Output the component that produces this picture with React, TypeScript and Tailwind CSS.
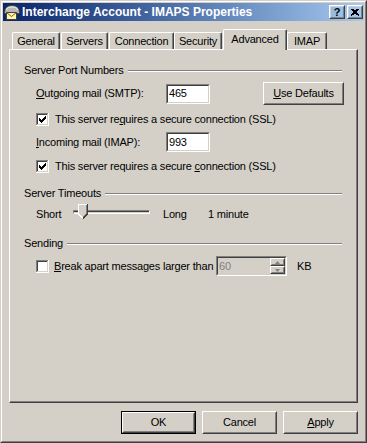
function Checkbox({ checked }: { checked?: boolean }) {
  const marks = [
    [3, 5], [4, 6], [5, 7], [6, 6], [7, 5], [8, 4], [9, 3],
  ];
  return (
    <svg width="13" height="13" viewBox="0 0 13 13" shapeRendering="crispEdges" className="shrink-0">
      <rect x="0" y="0" width="12" height="1" fill="#808080" />
      <rect x="0" y="0" width="1" height="12" fill="#808080" />
      <rect x="0" y="12" width="13" height="1" fill="#ffffff" />
      <rect x="12" y="0" width="1" height="13" fill="#ffffff" />
      <rect x="1" y="1" width="10" height="1" fill="#404040" />
      <rect x="1" y="1" width="1" height="10" fill="#404040" />
      <rect x="1" y="11" width="11" height="1" fill="#d4d0c8" />
      <rect x="11" y="1" width="1" height="11" fill="#d4d0c8" />
      <rect x="2" y="2" width="9" height="9" fill="#ffffff" />
      {checked && marks.map(([x, y]) => <rect key={x} x={x} y={y} width="1" height="3" fill="#000000" />)}
    </svg>
  );
}

function Raised({ children, className = '' }: { children?: React.ReactNode; className?: string }) {
  return (
    <div className={`border border-t-white border-l-white border-r-[#404040] border-b-[#404040] ${className}`}>
      <div className="h-full flex items-center justify-center border border-t-[#d4d0c8] border-l-[#d4d0c8] border-r-[#808080] border-b-[#808080]">
        {children}
      </div>
    </div>
  );
}

function Field({ value, className = '', disabled }: { value: string; className?: string; disabled?: boolean }) {
  return (
    <div className={`border border-t-[#808080] border-l-[#808080] border-r-white border-b-white ${className}`}>
      <div
        className={`h-full flex items-center border border-t-[#404040] border-l-[#404040] border-r-[#d4d0c8] border-b-[#d4d0c8] ${
          disabled ? 'bg-[#d4d0c8] text-[#808080]' : 'bg-white'
        }`}
      >
        <span className="pl-[1px] flex-1">{value}</span>
        {disabled && (
          <div className="w-[15px] h-full flex flex-col">
            <Raised className="flex-1">
              <svg width="5" height="3" viewBox="0 0 5 3"><path d="M2.5 0 L5 3 L0 3 Z" fill="#808080" /></svg>
            </Raised>
            <Raised className="flex-1">
              <svg width="5" height="3" viewBox="0 0 5 3"><path d="M0 0 L5 0 L2.5 3 Z" fill="#808080" /></svg>
            </Raised>
          </div>
        )}
      </div>
    </div>
  );
}

function GroupLabel({ label }: { label: string }) {
  return (
    <div className="flex items-center h-[13px] gap-[4px] mr-[2px]">
      <span className="whitespace-nowrap">{label}</span>
      <div className="flex-1 h-[2px] border-t border-t-[#808080] border-b border-b-white" />
    </div>
  );
}

function Tab({ label, className, selected }: { label: string; className: string; selected?: boolean }) {
  return (
    <div
      className={`flex items-center justify-center rounded-t-[2px] border-t border-l border-r border-t-white border-l-white border-r-[#404040] shadow-[inset_-1px_0_0_#808080] ${
        selected ? 'h-[21px] -mb-px relative z-10 bg-[#d4d0c8] pb-[2px]' : 'h-[17px] pt-[1px]'
      } ${className}`}
    >
      {label}
    </div>
  );
}

function TitleIcon() {
  return (
    <svg width="16" height="16" viewBox="0 0 16 16" className="shrink-0">
      <path d="M0.5 8.5 Q0.5 1.5 8 1.5 Q15.5 1.5 15.5 8.5 L15.5 9.5 L0.5 9.5 Z" fill="#b8b8b8" stroke="#404040" />
      <path d="M2.5 6 Q3 3 8 3 Q13 3 13.5 6" fill="none" stroke="#f0f0f0" />
      <rect x="2.5" y="8.5" width="10" height="7" fill="#fff4b0" stroke="#404040" />
      <path d="M2.5 8.5 L7.5 12.5 L12.5 8.5" fill="none" stroke="#806000" />
    </svg>
  );
}

function SliderThumb() {
  return (
    <svg width="10" height="15" viewBox="0 0 10 15" shapeRendering="crispEdges" className="absolute left-[5px] top-0">
      <path d="M0 0 H10 V10 L5 15 L0 10 Z" fill="#d4d0c8" />
      <path d="M0.5 10 V0.5 H9" fill="none" stroke="#ffffff" />
      <path d="M9.5 0 V10 L5 14.5" fill="none" stroke="#404040" />
      <path d="M8.5 1 V9.5 L5 13" fill="none" stroke="#808080" />
      <path d="M0.5 10 L4.5 14" fill="none" stroke="#ffffff" />
    </svg>
  );
}

export default function App() {
  return (
    <div className="w-[367px] h-[443px] bg-[#d4d0c8] border border-t-[#d4d0c8] border-l-[#d4d0c8] border-r-[#404040] border-b-[#404040] font-['Liberation_Sans',Arial,sans-serif] text-[11px] text-black tracking-[-0.2px] select-none">
      <div className="h-full flex flex-col p-px border border-t-white border-l-white border-r-[#808080] border-b-[#808080]">
        {/* title bar */}
        <div className="h-[18px] flex items-center pl-[1px] pr-[1px] bg-linear-to-r from-[#0a246a] to-[#a6caf0]">
          <TitleIcon />
          <span className="ml-[2px] text-white font-bold text-[12px] tracking-normal whitespace-nowrap">
            Interchange Account - IMAPS Properties
          </span>
          <div className="ml-auto flex gap-[2px]">
            <Raised className="w-[16px] h-[14px]">
              <span className="font-bold text-[11px] leading-none tracking-normal">?</span>
            </Raised>
            <Raised className="w-[16px] h-[14px]">
              <svg width="8" height="7" viewBox="0 0 8 7" shapeRendering="crispEdges">
                <path d="M0 0 L8 7 M1 0 L8 6 M8 0 L0 7 M7 0 L0 6" stroke="#000" strokeWidth="1.2" />
              </svg>
            </Raised>
          </div>
        </div>

        <div className="flex flex-col px-[6px]">
          {/* tabs */}
          <div className="mt-[8px] h-[20px] flex items-end pl-[3px]">
            <Tab label="General" className="w-[48px]" />
            <Tab label="Servers" className="ml-[1px] w-[47px]" />
            <Tab label="Connection" className="ml-[1px] w-[65px]" />
            <Tab label="Security" className="w-[48px]" />
            <Tab label="Advanced" className="ml-[1px] w-[64px]" selected />
            <Tab label="IMAP" className="w-[40px]" />
          </div>

          {/* panel */}
          <div className="h-[354px] flex flex-col pl-[14px] pr-[13px] border border-t-white border-l-white border-r-[#404040] border-b-[#404040] shadow-[inset_-1px_-1px_0_#808080]">
            <div className="mt-[14px]">
              <GroupLabel label="Server Port Numbers" />
            </div>

            <div className="mt-[5px] h-[23px] flex items-center pl-[12px]">
              <span className="w-[130px]">
                <u className="underline-offset-1">O</u>utgoing mail (SMTP):
              </span>
              <Field value="465" className="w-[44px] h-[20px]" />
              <Raised className="ml-auto w-[81px] h-[23px]">
                <span>
                  <u className="underline-offset-1">U</u>se Defaults
                </span>
              </Raised>
            </div>

            <div className="mt-[8px] h-[13px] flex items-center pl-[12px] gap-[6px]">
              <Checkbox checked />
              <span>
                This server re<u className="underline-offset-1">q</u>uires a secure connection (SSL)
              </span>
            </div>

            <div className="mt-[6px] h-[20px] flex items-center pl-[12px]">
              <span className="w-[130px]">
                <u className="underline-offset-1">I</u>ncoming mail (IMAP):
              </span>
              <Field value="993" className="w-[44px] h-[20px]" />
            </div>

            <div className="mt-[8px] h-[13px] flex items-center pl-[12px] gap-[6px]">
              <Checkbox checked />
              <span>
                This server requires a secure <u className="underline-offset-1">c</u>onnection (SSL)
              </span>
            </div>

            <div className="mt-[14px]">
              <GroupLabel label="Server Timeouts" />
            </div>

            <div className="mt-[4px] h-[20px] flex items-center pl-[12px]">
              <span className="w-[37px]">Short</span>
              <div className="relative w-[77px] h-[20px]">
                <div className="absolute left-0 right-0 top-[6px] h-[4px] border border-t-[#808080] border-l-[#808080] border-r-white border-b-white">
                  <div className="h-[2px] border-t border-t-[#404040] bg-[#d4d0c8]" />
                </div>
                <SliderThumb />
              </div>
              <span className="ml-[13px] w-[45px]">Long</span>
              <span>1 minute</span>
            </div>

            <div className="mt-[13px]">
              <GroupLabel label="Sending" />
            </div>

            <div className="mt-[6px] h-[20px] flex items-center pl-[12px]">
              <Checkbox />
              <span className="ml-[5px] w-[162px]">
                <u className="underline-offset-1">B</u>reak apart messages larger than
              </span>
              <Field value="60" className="w-[71px] h-[20px]" disabled />
              <span className="ml-[10px]">KB</span>
            </div>
          </div>

          {/* buttons */}
          <div className="mt-[8px] flex justify-end gap-[6px]">
            <div className="w-[75px] h-[23px] border border-black">
              <Raised className="h-full">OK</Raised>
            </div>
            <Raised className="w-[75px] h-[23px]">Cancel</Raised>
            <Raised className="w-[75px] h-[23px]">
              <span>
                <u className="underline-offset-1">A</u>pply
              </span>
            </Raised>
          </div>
        </div>
      </div>
    </div>
  );
}
